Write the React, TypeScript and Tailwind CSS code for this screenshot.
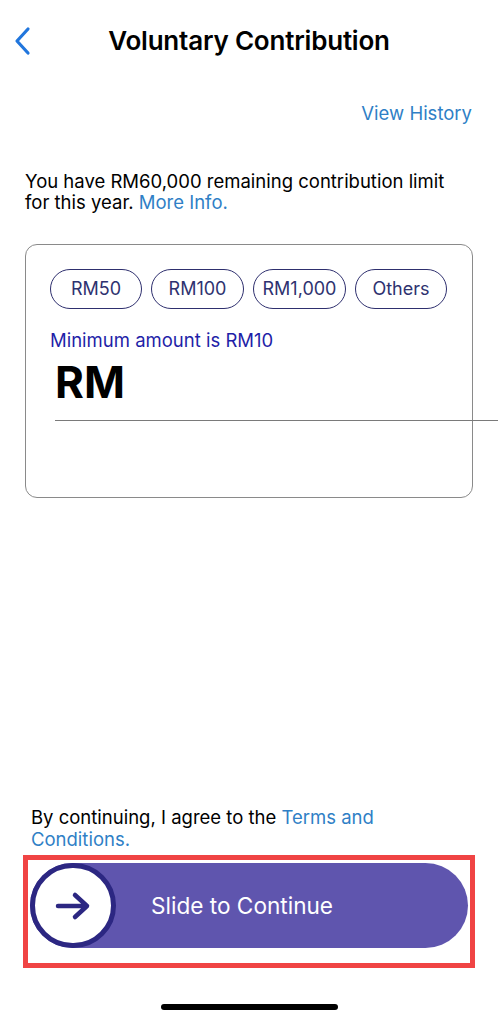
import React from "react";

const font = { fontFamily: "Inter, 'Noto Sans', sans-serif" };

function Chip({ label, w }: { label: string; w: string }) {
  return (
    <div
      className={`${w} h-10 rounded-full border-[1.5px] border-[#2e2f6e] flex items-center justify-center text-[18px] text-[#2e3270]`}
    >
      {label}
    </div>
  );
}

export default function App() {
  return (
    <div className="w-[498px] h-[1024px] bg-white flex flex-col overflow-hidden" style={font}>
      {/* Header */}
      <div className="relative h-[80px] flex items-center justify-center">
        <button className="absolute left-[12px] top-[26px] text-[#2176dd]">
          <svg width="22" height="30" viewBox="0 0 22 30" fill="none">
            <path d="M16 3 L5 15 L16 27" stroke="currentColor" strokeWidth="3.2" strokeLinecap="round" strokeLinejoin="round" />
          </svg>
        </button>
        <h1 className="text-[26px] font-semibold text-black tracking-[-0.2px]">Voluntary Contribution</h1>
      </div>

      <div className="flex justify-end pr-[26px] mt-[20px]">
        <span className="text-[18.5px] text-[#2f7fc6]">View History</span>
      </div>

      <p className="ml-[25px] w-[430px] mt-[43px] text-[18.5px] leading-[21px] text-black">
        You have RM60,000 remaining contribution limit for this year.{" "}
        <span className="text-[#2f7fc6]">More Info.</span>
      </p>

      {/* Amount card */}
      <div className="mx-[25px] mt-[31px] h-[254px] rounded-[12px] border border-[#8a8a8a] px-[24px] pt-[24px]">
        <div className="flex gap-[9px]">
          <Chip label="RM50" w="w-[92px]" />
          <Chip label="RM100" w="w-[93px]" />
          <Chip label="RM1,000" w="w-[93px]" />
          <Chip label="Others" w="w-[92px]" />
        </div>
        <div className="mt-[20px] text-[18.5px] leading-[22px] text-[#1f1fa8]">Minimum amount is RM10</div>
        <div className="ml-[5px] mt-[5px] text-[44px] font-bold leading-[52px] text-black">RM</div>
        <div className="ml-[5px] mt-[12px] w-[443px] h-px bg-[#7a7a7a]" />
      </div>

      <div className="flex-1" />

      <p className="ml-[31px] w-[360px] text-[18.5px] leading-[22px] text-black">
        By continuing, I agree to the <span className="text-[#2f7fc6]">Terms and Conditions.</span>
      </p>

      {/* Slider */}
      <div className="mx-[23px] mt-[5px] border-[5px] border-[#f04444] px-[2px] pt-[3px] pb-[15px]">
        <div className="relative h-[85px] rounded-full bg-[#5f55ae] flex items-center">
          <div className="absolute left-0 top-0 w-[86px] h-[85px] rounded-full bg-white border-[5px] border-[#2c2782] flex items-center justify-center">
            <svg width="38" height="30" viewBox="0 0 38 30" fill="none">
              <path d="M4 15 H33 M21 4 L33 15 L21 26" stroke="#2c2782" strokeWidth="4.5" strokeLinecap="round" strokeLinejoin="round" />
            </svg>
          </div>
          <span className="ml-[121px] text-[22.6px] text-white">Slide to Continue</span>
        </div>
      </div>

      <div className="flex justify-center mt-[36px] mb-[14px]">
        <div className="w-[177px] h-[6px] rounded-full bg-black" />
      </div>
    </div>
  );
}
